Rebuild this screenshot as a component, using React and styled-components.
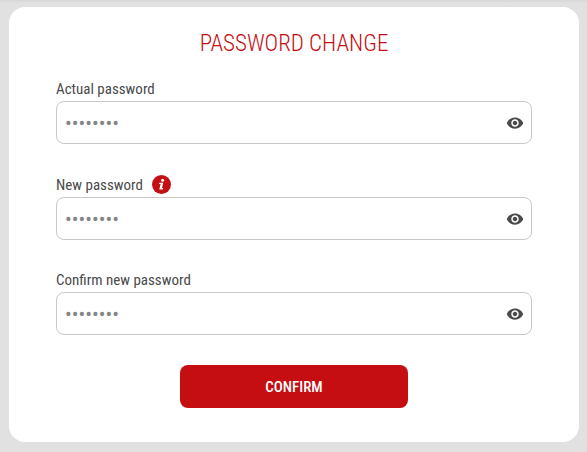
import React, { useState } from "react";
import styled, { createGlobalStyle } from "styled-components";

const RED = "#c40e12";

const GlobalStyle = createGlobalStyle`
  *, *::before, *::after { box-sizing: border-box; }
  body {
    margin: 0;
    background: #e1e1e1;
    color: #4a4a4a;
    font-family: "Roboto Condensed", "Roboto", sans-serif;
  }
  button, input { font: inherit; }
`;

const Page = styled.main`
  padding: 7px 8px 10px 9px;
  background: linear-gradient(#d6d6d6, #e1e1e1 3px);
`;

const Card = styled.form`
  display: flex;
  flex-direction: column;
  padding: 23px 47px 34px;
  border-radius: 16px;
  background: #fff;
`;

const Title = styled.h1`
  margin: 0 0 19px;
  color: ${RED};
  font-size: 23px;
  font-weight: 300;
  line-height: 28px;
  text-align: center;
  text-transform: uppercase;
`;

const Fields = styled.div`
  display: flex;
  flex-direction: column;
  gap: 28px;
`;

const Field = styled.div`
  display: flex;
  flex-direction: column;
`;

const LabelRow = styled.div`
  display: flex;
  align-items: center;
  gap: 9px;
  min-height: 24px;
`;

const Label = styled.label`
  font-size: 15px;
  line-height: 24px;
`;

const InfoButton = styled.button`
  display: flex;
  align-items: center;
  height: 25px;
  padding: 0;
  border: 0;
  background: none;
  cursor: pointer;
`;

const InputBox = styled.div`
  display: flex;
  align-items: center;
  height: 43px;
  padding: 0 7px 0 8px;
  border: 1px solid #c8c8c8;
  border-radius: 8px;

  &:focus-within { border-color: #8a8a8a; }
`;

const PasswordInput = styled.input`
  flex: 1;
  min-width: 0;
  height: 100%;
  padding: 0;
  border: 0;
  outline: 0;
  background: transparent;
  color: #4a4a4a;
  font-size: 20px;

  &::placeholder { color: #858585; opacity: 1; }
`;

const EyeButton = styled.button`
  display: flex;
  padding: 0;
  border: 0;
  background: none;
  color: #4a4a4a;
  cursor: pointer;
`;

const ConfirmButton = styled.button`
  align-self: center;
  width: 48%;
  height: 43px;
  margin-top: 30px;
  padding: 0;
  border: 0;
  border-radius: 8px;
  background: ${RED};
  color: #fff;
  font-size: 15px;
  font-weight: 500;
  text-transform: uppercase;
  cursor: pointer;
`;

function EyeIcon() {
  return (
    <svg width="18" height="18" viewBox="0 0 24 24" fill="currentColor" aria-hidden="true">
      <path d="M12 4.5C7 4.5 2.73 7.61 1 12c1.73 4.39 6 7.5 11 7.5s9.27-3.11 11-7.5c-1.73-4.39-6-7.5-11-7.5zM12 17c-2.76 0-5-2.24-5-5s2.24-5 5-5 5 2.24 5 5-2.24 5-5 5zm0-8c-1.66 0-3 1.34-3 3s1.34 3 3 3 3-1.34 3-3-1.34-3-3-3z" />
    </svg>
  );
}

function InfoIcon() {
  return (
    <svg width="19" height="19" viewBox="0 0 19 19" aria-hidden="true">
      <circle cx="9.5" cy="9.5" r="9.5" fill={RED} />
      <circle cx="10.6" cy="5.2" r="1.5" fill="#fff" />
      <path d="M7.4 7.7h3.9l-1.3 5.4h1.2l-.3 1.4H7.3l1.3-5.4H7.1z" fill="#fff" />
    </svg>
  );
}

function PasswordField({ id, label, info }) {
  const [visible, setVisible] = useState(false);
  return (
    <Field>
      <LabelRow>
        <Label htmlFor={id}>{label}</Label>
        {info && (
          <InfoButton type="button" aria-label="Password requirements">
            <InfoIcon />
          </InfoButton>
        )}
      </LabelRow>
      <InputBox>
        <PasswordInput id={id} type={visible ? "text" : "password"} placeholder="••••••••" />
        <EyeButton
          type="button"
          aria-label={visible ? "Hide password" : "Show password"}
          onClick={() => setVisible(!visible)}
        >
          <EyeIcon />
        </EyeButton>
      </InputBox>
    </Field>
  );
}

export default function App() {
  return (
    <>
      <GlobalStyle />
      <Page>
        <Card onSubmit={(event) => event.preventDefault()}>
          <Title>Password change</Title>
          <Fields>
            <PasswordField id="actual-password" label="Actual password" />
            <PasswordField id="new-password" label="New password" info />
            <PasswordField id="confirm-password" label="Confirm new password" />
          </Fields>
          <ConfirmButton type="submit">Confirm</ConfirmButton>
        </Card>
      </Page>
    </>
  );
}
